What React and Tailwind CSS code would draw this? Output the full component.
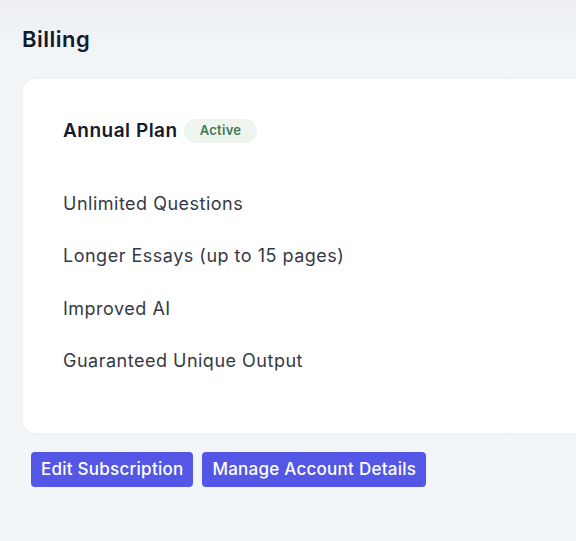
import React from "react";

const features = [
  "Unlimited Questions",
  "Longer Essays (up to 15 pages)",
  "Improved AI",
  "Guaranteed Unique Output",
];

const App = () => {
  return (
    <div
      className="min-h-screen bg-gradient-to-b from-[#eceef1] to-[#f3f6f8] to-[60px] pl-[22px] pt-[25px]"
      style={{ fontFamily: "Inter, 'Noto Sans', sans-serif" }}
    >
      <h1 className="text-[22px] font-semibold tracking-[0.5px] text-[#141a2e] leading-[28px]">Billing</h1>

      <div className="mt-[26px] ml-px bg-white rounded-l-xl shadow-[0_0_4px_rgba(0,0,0,0.04)] pl-10 pt-10 pb-[59px]">
        <div className="flex items-center gap-[6px] h-6">
          <span className="text-[19px] font-semibold tracking-[0.5px] text-[#141a2e]">Annual Plan</span>
          <span className="px-4 h-6 flex items-center rounded-full bg-[#eef5ef] text-[#3e7a55] text-[13px] font-semibold tracking-[0.3px]">
            Active
          </span>
        </div>

        <ul className="mt-[48px] flex flex-col gap-[26.3px]">
          {features.map((f) => (
            <li key={f} className="text-[18px] leading-[26px] tracking-[0.5px] text-[#363945]">
              {f}
            </li>
          ))}
        </ul>
      </div>

      <div className="mt-[19px] ml-[9px] flex gap-[9px]">
        <button className="bg-[#5457e6] text-white text-[17px] font-medium tracking-[0.25px] h-[35px] px-[10px] rounded-[4px]">
          Edit Subscription
        </button>
        <button className="bg-[#5457e6] text-white text-[17px] font-medium tracking-[0.25px] h-[35px] px-[10px] rounded-[4px]">
          Manage Account Details
        </button>
      </div>
    </div>
  );
};

export default App;
